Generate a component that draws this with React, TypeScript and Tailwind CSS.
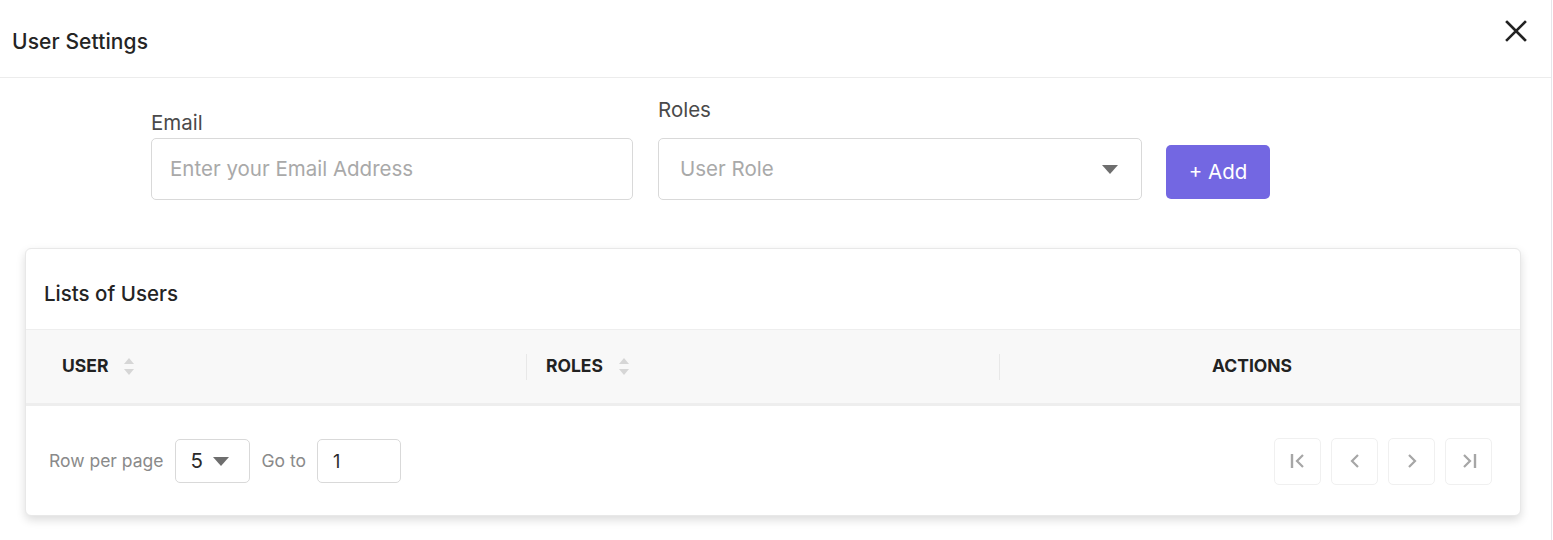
import React from "react";

const font = { fontFamily: "Inter, 'Noto Sans', sans-serif" };

function SortIcon() {
  return (
    <svg width="12" height="18" viewBox="0 0 12 18" className="ml-[15px]">
      <path d="M6 0 L11 6 L1 6 Z" fill="#d6d6d6" />
      <path d="M6 17 L11 11 L1 11 Z" fill="#d6d6d6" />
    </svg>
  );
}

function PageBtn({ children }: { children: React.ReactNode }) {
  return (
    <div className="w-[47px] h-[47px] rounded-[5px] border border-[#f0f0f0] flex items-center justify-center bg-white">
      {children}
    </div>
  );
}

export default function App() {
  return (
    <div className="w-[1553px] h-[540px] bg-white overflow-hidden" style={font}>
      <div className="w-[1552px] h-[540px] border-r border-[#e6e6ea] bg-white">
        {/* Header */}
        <div className="h-[78px] border-b border-[#ececec] flex items-center justify-between pl-[12px] pr-[24px]">
          <div className="text-[21px] font-medium text-[#242424] tracking-[0.1px] mt-[7px]">User Settings</div>
          <svg width="22" height="22" viewBox="0 0 22 22" className="-mt-[16px]">
            <path d="M2 2 L20 20 M20 2 L2 20" stroke="#222" strokeWidth="2.6" strokeLinecap="square" />
          </svg>
        </div>

        {/* Form */}
        <div className="flex items-end pl-[151px] pt-[20px]">
          <div className="flex flex-col w-[482px]">
            <label className="text-[20.5px] leading-[24px] text-[#4a4a4a] mb-[3px]">Email</label>
            <div className="h-[62px] rounded-[5px] border border-[#d9d9d9] flex items-center px-[18px] text-[20.5px] text-[#a9a9a9]">
              Enter your Email Address
            </div>
          </div>
          <div className="flex flex-col w-[484px] ml-[25px]">
            <label className="text-[20.5px] leading-[24px] text-[#4a4a4a] mb-[16px]">Roles</label>
            <div className="h-[62px] rounded-[5px] border border-[#d9d9d9] flex items-center justify-between pl-[21px] pr-[23px] text-[20.5px] text-[#a9a9a9]">
              <span>User Role</span>
              <svg width="16" height="9" viewBox="0 0 16 9">
                <path d="M0 0 L16 0 L8 9 Z" fill="#6e6e6e" />
              </svg>
            </div>
          </div>
          <button className="ml-[24px] w-[104px] h-[54px] mb-[1px] rounded-[5px] bg-[#7367e2] text-white text-[20.5px] flex items-center justify-center">
            + Add
          </button>
        </div>

        {/* Card */}
        <div className="ml-[25px] mt-[48px] w-[1496px] h-[268px] rounded-[6px] border border-[#e8e8e8] bg-white shadow-[0_4px_10px_rgba(0,0,0,0.14)] overflow-hidden">
          <div className="h-[80px] pl-[18px] pt-[33px] text-[20.5px] leading-[24px] font-medium text-[#242424]">
            Lists of Users
          </div>
          <div className="h-[77px] border-t-[1px] border-b-[3px] border-[#eeeeee] bg-[#f8f8f8] flex items-center">
            <div className="w-[500px] flex items-center pl-[36px] text-[17.5px] font-bold text-[#222]">
              USER
              <SortIcon />
            </div>
            <div className="w-[473px] h-[26px] border-l border-[#e8e8e8] flex items-center pl-[19px] text-[17.5px] font-bold text-[#222]">
              ROLES
              <SortIcon />
            </div>
            <div className="flex-1 h-[26px] border-l border-[#e8e8e8] flex items-center justify-center pr-[16px] text-[17.5px] font-bold text-[#222]">
              ACTIONS
            </div>
          </div>
          <div className="flex items-center justify-between pl-[23px] pr-[28px] h-[108px] pt-[2px]">
            <div className="flex items-center">
              <span className="text-[17.5px] text-[#8a8a8a]">Row per page</span>
              <div className="ml-[11px] w-[75px] h-[44px] rounded-[5px] border border-[#d9d9d9] flex items-center pl-[15px] text-[20.5px] text-[#2a2a2a]">
                5
                <svg width="16" height="9" viewBox="0 0 16 9" className="ml-[10px]">
                  <path d="M0 0 L16 0 L8 9 Z" fill="#6e6e6e" />
                </svg>
              </div>
              <span className="ml-[12px] text-[17.5px] text-[#8a8a8a]">Go to</span>
              <div className="ml-[11px] w-[84px] h-[44px] rounded-[5px] border border-[#d9d9d9] flex items-center pl-[15px] text-[18px] text-[#2a2a2a]">
                1
              </div>
            </div>
            <div className="flex items-center gap-[10px]">
              <PageBtn>
                <svg width="20" height="20" viewBox="0 0 20 20">
                  <path d="M4 3 V17" stroke="#a6a6a6" strokeWidth="2.4" />
                  <path d="M15 4 L9 10 L15 16" stroke="#a6a6a6" strokeWidth="2.2" fill="none" />
                </svg>
              </PageBtn>
              <PageBtn>
                <svg width="20" height="20" viewBox="0 0 20 20">
                  <path d="M13 4 L7 10 L13 16" stroke="#a6a6a6" strokeWidth="2.2" fill="none" />
                </svg>
              </PageBtn>
              <PageBtn>
                <svg width="20" height="20" viewBox="0 0 20 20">
                  <path d="M7 4 L13 10 L7 16" stroke="#a6a6a6" strokeWidth="2.2" fill="none" />
                </svg>
              </PageBtn>
              <PageBtn>
                <svg width="20" height="20" viewBox="0 0 20 20">
                  <path d="M5 4 L11 10 L5 16" stroke="#a6a6a6" strokeWidth="2.2" fill="none" />
                  <path d="M16 3 V17" stroke="#a6a6a6" strokeWidth="2.4" />
                </svg>
              </PageBtn>
            </div>
          </div>
        </div>
      </div>
    </div>
  );
}
